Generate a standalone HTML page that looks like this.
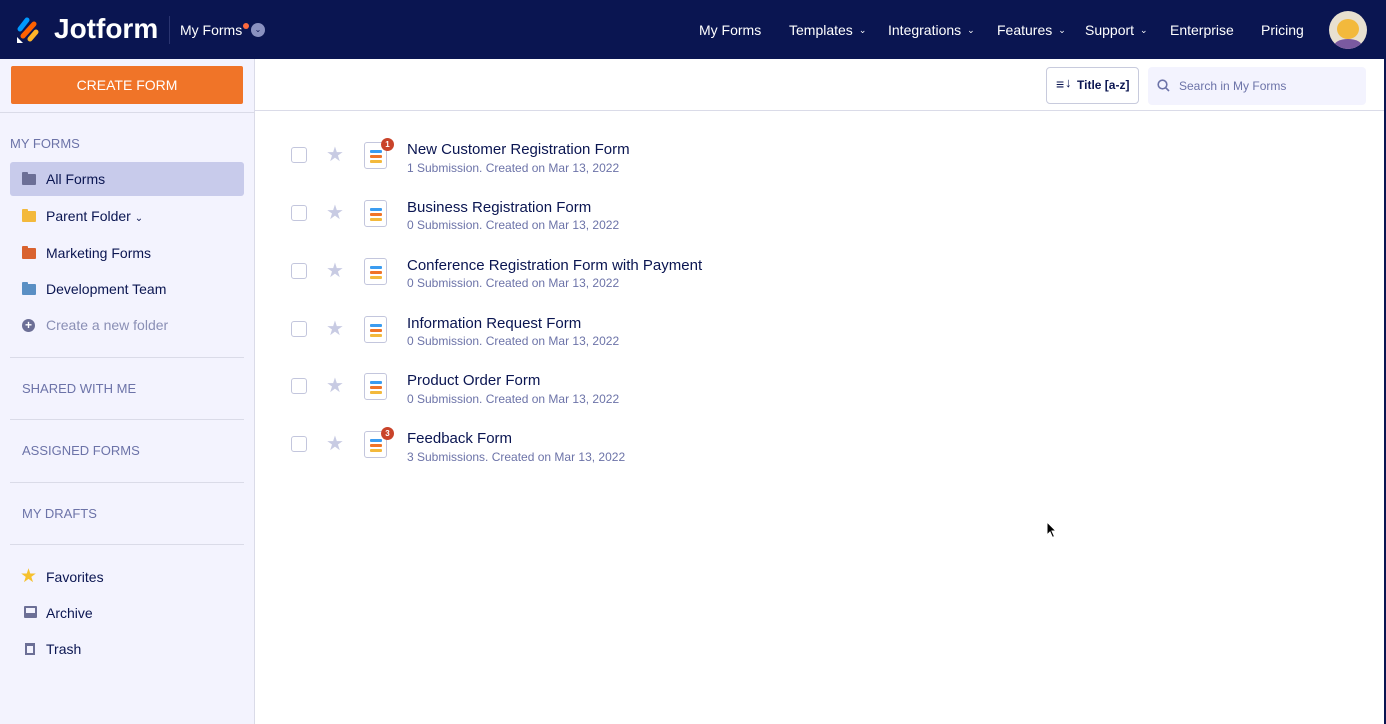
<!DOCTYPE html>
<html><head><meta charset="utf-8"><style>
*{box-sizing:border-box;margin:0;padding:0}
body{width:1386px;height:724px;overflow:hidden;background:#fff;font-family:"Liberation Sans",sans-serif;position:relative;color:#0a1551}
.a{position:absolute;white-space:nowrap}
#hdr{position:absolute;left:0;top:0;width:1386px;height:59px;background:#0a1551}
.nav{color:#fff;font-size:14px;top:22px}
.car{font-size:9px;margin-left:6px;vertical-align:2px}
#side{position:absolute;left:0;top:59px;width:255px;height:665px;background:#f3f3fe;border-right:1px solid #dadbe8}
.sec{font-size:13px;color:#6c73a8;left:22px}
.fi{font-size:14px;color:#0a1551;left:46px}
.hr{position:absolute;left:10px;width:234px;height:1px;background:#dadbe8}
.fold{position:absolute;left:22px;width:14px;height:11px;border-radius:1px}
.fold:before{content:"";position:absolute;left:0;top:-2px;width:6px;height:3px;background:inherit;border-radius:1px 1px 0 0}
.t{font-size:15px;left:407px;color:#0a1551}
.s{font-size:12px;left:407px;color:#6c73a8}
.cb{position:absolute;left:291px;width:16px;height:16px;border:1.5px solid #c3c6dd;border-radius:3px;background:#fff}
.st{position:absolute;left:326px;color:#c8cbe3;font-size:20px}
.ic{position:absolute;left:364px;width:23px;height:27px;border:1.5px solid #c3c6dd;border-radius:3px;background:#fff}
.ic i{position:absolute;left:5px;width:12px;height:2.5px;border-radius:1px}
.bd{position:absolute;left:381px;width:13px;height:13px;border-radius:50%;background:#c9432a;color:#fff;font-size:8px;text-align:center;line-height:13px;font-weight:bold}
</style></head><body>
<div id="hdr">
 <svg class="a" style="left:15px;top:16px" width="28" height="28" viewBox="0 0 28 28">
  <line x1="5" y1="13" x2="12" y2="4" stroke="#0099ff" stroke-width="5" stroke-linecap="round"/>
  <line x1="8" y1="20" x2="19" y2="8" stroke="#ff6100" stroke-width="5" stroke-linecap="round"/>
  <line x1="15" y1="23" x2="21" y2="16" stroke="#ffb629" stroke-width="5" stroke-linecap="round"/>
  <path d="M2 27 L2 21 L8 27Z" fill="#fff"/>
 </svg>
 <div class="a" style="left:54px;top:13px;color:#fff;font-size:28px;font-weight:bold">Jotform</div>
 <div class="a" style="left:169px;top:16px;width:1px;height:28px;background:#2a3470"></div>
 <div class="a" style="left:180px;top:22px;color:#fff;font-size:14px">My Forms</div>
 <div class="a" style="left:243px;top:23px;width:6px;height:6px;border-radius:50%;background:#ff6a3d"></div>
 <div class="a" style="left:251px;top:23px;width:14px;height:14px;border-radius:50%;background:#8a91c0;color:#0a1551;font-size:8px;text-align:center;line-height:14px">⌄</div>
 <div class="a nav" style="left:699px">My Forms</div>
 <div class="a nav" style="left:789px">Templates<span class="car">⌄</span></div>
 <div class="a nav" style="left:888px">Integrations<span class="car">⌄</span></div>
 <div class="a nav" style="left:997px">Features<span class="car">⌄</span></div>
 <div class="a nav" style="left:1085px">Support<span class="car">⌄</span></div>
 <div class="a nav" style="left:1170px">Enterprise</div>
 <div class="a nav" style="left:1261px">Pricing</div>
 <div class="a" style="left:1329px;top:11px;width:38px;height:38px;border-radius:50%;background:#e8e0d0;overflow:hidden">
  <div style="position:absolute;left:5px;top:28px;width:28px;height:14px;border-radius:50%;background:#7a5aa0"></div>
  <div style="position:absolute;left:8px;top:8px;width:22px;height:20px;border-radius:50%;background:#f3b93c"></div>
 </div>
 <div class="a" style="left:1384px;top:0;width:2px;height:724px;background:#0a1551"></div>
</div>
<div id="side">
 <div class="a" style="left:11px;top:7px;width:232px;height:38px;background:#f07428;border-radius:2px;color:#fff;font-size:14px;text-align:center;line-height:38px">CREATE FORM</div>
 <div class="a" style="left:0;top:53px;width:254px;height:1px;background:#dadbe8"></div>
 <div class="a sec" style="left:10px;top:77px">MY FORMS</div>
 <div class="a" style="left:10px;top:103px;width:234px;height:34px;background:#c8cbeb;border-radius:3px"></div>
 <div class="fold" style="top:115px;background:#6c6f96"></div><div class="a fi" style="top:112px">All Forms</div>
 <div class="fold" style="top:152px;background:#f3b93c"></div><div class="a fi" style="top:149px">Parent Folder <span style="font-size:10px">⌄</span></div>
 <div class="fold" style="top:189px;background:#d9622f"></div><div class="a fi" style="top:186px">Marketing Forms</div>
 <div class="fold" style="top:225px;background:#5a8fc4"></div><div class="a fi" style="top:222px">Development Team</div>
 <div class="a" style="left:22px;top:260px;width:13px;height:13px;border-radius:50%;background:#6c6f96;color:#fff;font-size:12px;text-align:center;line-height:13px;font-weight:bold">+</div>
 <div class="a fi" style="top:258px;color:#8a8fb5">Create a new folder</div>
 <div class="hr" style="top:298px"></div>
 <div class="a sec" style="top:322px">SHARED WITH ME</div>
 <div class="hr" style="top:360px"></div>
 <div class="a sec" style="top:384px">ASSIGNED FORMS</div>
 <div class="hr" style="top:423px"></div>
 <div class="a sec" style="top:447px">MY DRAFTS</div>
 <div class="hr" style="top:485px"></div>
 <div class="a" style="left:20px;top:506px;color:#f6c12e;font-size:19px">★</div><div class="a fi" style="top:510px">Favorites</div>
 <div class="a" style="left:24px;top:547px;width:13px;height:12px;background:#6c6f96;border-radius:1px"><div style="position:absolute;left:2px;top:2px;width:9px;height:5px;background:#f3f3fe"></div></div><div class="a fi" style="top:546px">Archive</div>
 <div class="a" style="left:25px;top:584px;width:10px;height:12px;border:2px solid #6c6f96;border-top-width:3px"></div><div class="a fi" style="top:582px">Trash</div>
</div>
<div class="a" style="left:255px;top:110px;width:1129px;height:1px;background:#dadbe8"></div>
<div class="a" style="left:1046px;top:67px;width:93px;height:37px;border:1px solid #c8cbdd;border-radius:4px;font-size:12px;font-weight:bold;line-height:35px;padding-left:30px">Title [a-z]</div>
<div class="a" style="left:1056px;top:76px;font-size:14px;font-weight:bold">≡</div><div class="a" style="left:1065px;top:75px;font-size:13px;font-weight:bold">↓</div>
<div class="a" style="left:1148px;top:67px;width:218px;height:38px;background:#f3f3fe;border-radius:4px;font-size:12px;color:#6c73a8;line-height:38px;padding-left:31px">Search in My Forms</div>
<svg class="a" style="left:1157px;top:79px" width="13" height="13" viewBox="0 0 13 13"><circle cx="5.5" cy="5.5" r="4.3" fill="none" stroke="#6c73a8" stroke-width="1.6"/><path d="M8.8 8.8 L12 12" stroke="#6c73a8" stroke-width="1.6"/></svg>

<div class="cb" style="top:147px"></div><div class="st" style="top:142px">★</div><div class="ic" style="top:142px"><i style="top:7px;background:#3b9cf0"></i><i style="top:12px;background:#f07428"></i><i style="top:17px;background:#f3b93c"></i></div><div class="bd" style="top:138px">1</div>
<div class="a t" style="top:141px">New Customer Registration Form</div><div class="a s" style="top:161px">1 Submission. Created on Mar 13, 2022</div>

<div class="cb" style="top:205px"></div><div class="st" style="top:200px">★</div><div class="ic" style="top:200px"><i style="top:7px;background:#3b9cf0"></i><i style="top:12px;background:#f07428"></i><i style="top:17px;background:#f3b93c"></i></div>
<div class="a t" style="top:199px">Business Registration Form</div><div class="a s" style="top:218px">0 Submission. Created on Mar 13, 2022</div>

<div class="cb" style="top:263px"></div><div class="st" style="top:258px">★</div><div class="ic" style="top:258px"><i style="top:7px;background:#3b9cf0"></i><i style="top:12px;background:#f07428"></i><i style="top:17px;background:#f3b93c"></i></div>
<div class="a t" style="top:257px">Conference Registration Form with Payment</div><div class="a s" style="top:276px">0 Submission. Created on Mar 13, 2022</div>

<div class="cb" style="top:321px"></div><div class="st" style="top:316px">★</div><div class="ic" style="top:316px"><i style="top:7px;background:#3b9cf0"></i><i style="top:12px;background:#f07428"></i><i style="top:17px;background:#f3b93c"></i></div>
<div class="a t" style="top:315px">Information Request Form</div><div class="a s" style="top:334px">0 Submission. Created on Mar 13, 2022</div>

<div class="cb" style="top:378px"></div><div class="st" style="top:373px">★</div><div class="ic" style="top:373px"><i style="top:7px;background:#3b9cf0"></i><i style="top:12px;background:#f07428"></i><i style="top:17px;background:#f3b93c"></i></div>
<div class="a t" style="top:372px">Product Order Form</div><div class="a s" style="top:392px">0 Submission. Created on Mar 13, 2022</div>

<div class="cb" style="top:436px"></div><div class="st" style="top:431px">★</div><div class="ic" style="top:431px"><i style="top:7px;background:#3b9cf0"></i><i style="top:12px;background:#f07428"></i><i style="top:17px;background:#f3b93c"></i></div><div class="bd" style="top:427px">3</div>
<div class="a t" style="top:430px">Feedback Form</div><div class="a s" style="top:450px">3 Submissions. Created on Mar 13, 2022</div>

<svg class="a" style="left:1046px;top:521px" width="12" height="18" viewBox="0 0 12 18"><path d="M1 1 L1 14 L4 11 L6.5 16.5 L8.5 15.5 L6 10 L10 10 Z" fill="#000" stroke="#fff" stroke-width="1"/></svg>
</body></html>
